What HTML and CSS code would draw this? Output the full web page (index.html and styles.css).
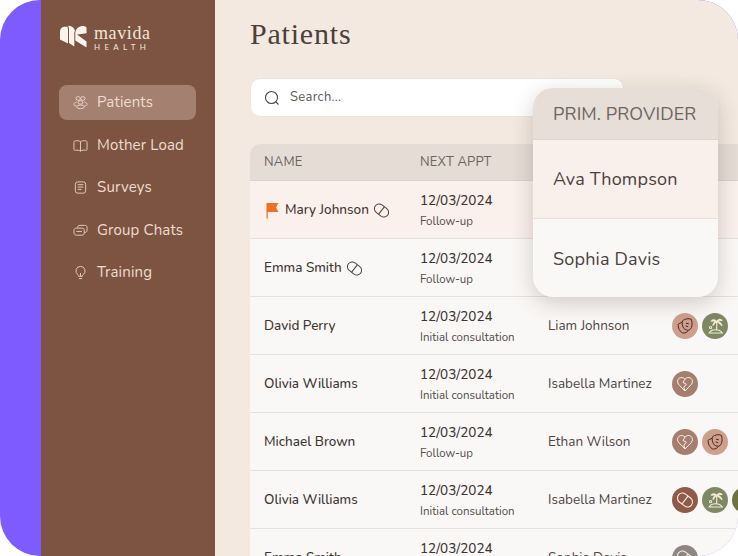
FILE: index.html
```html
<!DOCTYPE html>
<html lang="en">
<head>
<meta charset="utf-8">
<title>Patients</title>
<link rel="stylesheet" href="styles.css">
</head>
<body>
<svg class="defs" width="0" height="0" aria-hidden="true">
  <symbol id="pill" viewBox="0 0 18 18"><g fill="none" stroke="currentColor" stroke-width="1.1"><rect x=".8" y="4" width="16.4" height="10" rx="5" transform="rotate(38 9 9)"/><path d="M12 5.200 6 12.800"/></g></symbol>
  <symbol id="heart" viewBox="0 0 18 18"><g fill="none" stroke="currentColor" stroke-width="1" stroke-linejoin="round"><path d="M9 16 2.800 9.600C1 7.600 1.200 4.600 3.200 3.200 5 2 7.400 2.400 9 4.200 10.600 2.400 13 2 14.800 3.200 16.800 4.600 17 7.600 15.200 9.600Z"/><path d="M9 4.200 7 7.400 10.400 9.200 7.800 12.200 9 16"/></g></symbol>
  <symbol id="masks" viewBox="0 0 18 18"><g fill="none" stroke="currentColor" stroke-width="1" stroke-linejoin="round"><path d="M6.500 3.800C8.500 1.800 13 1 15.400 2.400 16.600 6 16.400 10.400 14 12.600 12.200 14 9.400 13 7.800 11.400 6.400 9.600 5.800 6 6.500 3.800Z"/><path d="M6 5.400C4.500 5.800 3 6.600 2 7.400 2 10.800 3.600 14.600 6.600 16 9.400 16.400 11.400 15 12.400 13.400"/><path d="M10 6.200 12.800 6.800M9.600 9 12.200 9.600"/></g></symbol>
  <symbol id="palm" viewBox="0 0 18 18"><g fill="none" stroke="currentColor" stroke-width="1.100" stroke-linecap="round" stroke-linejoin="round"><path d="M3 16C4.500 13.600 7 12.800 9.500 12.800 12.500 12.800 15 14 16.500 16Z"/><path d="M10.500 12.800C11 9.500 11 6.500 10.500 4.500"/><path d="M10.500 4.500C9 2.400 7 2.400 5.200 4.200 7.500 3.700 9 3.800 10.500 4.500ZM10.500 4.500C12 2 14 1.800 16 3.500 14 3.400 12 3.700 10.500 4.500ZM10.500 4.500C13 4.500 15 6 16 8.500 14.200 6.700 12.400 5.500 10.500 4.500ZM10.500 4.500C8.500 5 7.300 6.300 7 8.500 8 7 9.200 5.500 10.500 4.500Z"/><circle cx="4.600" cy="10.600" r="1.100"/></g></symbol>
</svg>
<div class="frame">
  <aside class="sidebar">
    <div class="brand">
      <svg class="brand-mark" viewBox="0 0 27 24" aria-hidden="true"><path fill="#fbf4ec" d="M0 6.500C0 3.500 2 1.800 4.500 1.800H7.500L8 5V18.500L0 14.500Z"/><path fill="#fbf4ec" d="M8 .8C11.500.8 14 2.500 15 5.500 14.500 6.500 14.300 7.500 14.300 8.500V21.500L9 18V5C9 3.500 8.800 2 8 .8Z"/><path fill="#fbf4ec" d="M15.300 8C15.800 3.500 19 1 23 1 24.500 1 25.700 1.500 26.500 2.500V8.200L17 9.500 26.500 16.500V22.500L15.300 15.500Z"/></svg>
      <div class="brand-text"><span class="brand-name">mavida</span><span class="brand-sub">HEALTH</span></div>
    </div>
    <nav class="nav">
      <a class="nav-item active"><svg class="nav-icon" viewBox="0 0 16 16" aria-hidden="true"><g fill="none" stroke="currentColor"><ellipse cx="5.500" cy="3.700" rx="2.300" ry="2"/><ellipse cx="10.500" cy="3.700" rx="2.300" ry="2"/><ellipse cx="8" cy="7.900" rx="2.600" ry="1.900"/><path d="M4 7.500C2 8 1 8.800 1 10s1.500 1.700 3 1.800M12 7.500c2 .5 3 1.300 3 2.500s-1.500 1.700-3 1.800"/><ellipse cx="8" cy="12.600" rx="4" ry="2"/></g></svg><span>Patients</span></a>
      <a class="nav-item"><svg class="nav-icon" viewBox="0 0 16 16" aria-hidden="true"><g fill="none" stroke="currentColor" stroke-linejoin="round"><path d="M8 4C6.500 2.800 4 2.500 2 3.200 1 3.500 1 4 1 5v7c0 1 .5 1.300 1.500 1.100C4.500 12.700 6.500 13 8 14c1.500-1 3.500-1.300 5.500-.9 1 .2 1.500-.1 1.500-1.100V5c0-1 0-1.500-1-1.800C12 2.500 9.500 2.800 8 4ZM8 4v10"/></g></svg><span>Mother Load</span></a>
      <a class="nav-item"><svg class="nav-icon" viewBox="0 0 16 16" aria-hidden="true"><g fill="none" stroke="currentColor"><rect x="2.500" y="2" width="11" height="12" rx="2.500"/><path d="M5 5h6M5 7.500h6M5 10h4"/></g></svg><span>Surveys</span></a>
      <a class="nav-item"><svg class="nav-icon" viewBox="0 0 16 16" aria-hidden="true"><g fill="none" stroke="currentColor" stroke-linejoin="round"><path d="M5 5V4.500C5 3 6 2.500 7.500 2.500h5c1.500 0 2.500.8 2.500 2.300v3c0 1.400-1 2.200-2.200 2.200H12"/><path d="M3.500 5.500h6C11 5.500 12 6.300 12 7.700v3c0 1.500-1 2.300-2.500 2.300H4c-1.800 0-3-1-3-2.700V8c0-1.500 1-2.500 2.500-2.500Z"/><path d="M3.500 9h6"/></g></svg><span>Group Chats</span></a>
      <a class="nav-item"><svg class="nav-icon" viewBox="0 0 16 16" aria-hidden="true"><g fill="none" stroke="currentColor" stroke-linejoin="round"><path d="M8 1.500a4.800 4.800 0 0 0-3 8.600c.8.700 1 1.300 1 2h4c0-.7.200-1.300 1-2a4.800 4.800 0 0 0-3-8.600Z"/><path d="M6.300 14.500h3.400M8 12V8.500"/></g></svg><span>Training</span></a>
    </nav>
  </aside>
  <main class="main">
    <h1 class="title">Patients</h1>
    <div class="search">
      <svg class="search-icon" viewBox="0 0 16 16" aria-hidden="true"><g fill="none" stroke="currentColor" stroke-width="1.100"><circle cx="7.500" cy="7.500" r="6"/><path d="M12 12l2.500 2.500"/></g></svg>
      <span class="search-text">Search...</span>
    </div>
    <div class="table">
      <div class="row head"><span>NAME</span><span>NEXT APPT</span><span></span><span></span></div>
      <div class="row flagged">
        <div class="name"><svg class="flag" viewBox="0 0 14 17" aria-hidden="true"><path fill="#ee6f25" d="M1 1h12l-2.500 4.500L13 10H2.200v6.500H1Z"/></svg>Mary Johnson<svg class="pill-mark"><use href="#pill"/></svg></div>
        <div class="appt"><b>12/03/2024</b><small>Follow-up</small></div><span></span><span></span>
      </div>
      <div class="row">
        <div class="name">Emma Smith<svg class="pill-mark"><use href="#pill"/></svg></div>
        <div class="appt"><b>12/03/2024</b><small>Follow-up</small></div><span></span><span></span>
      </div>
      <div class="row">
        <div class="name">David Perry</div>
        <div class="appt"><b>12/03/2024</b><small>Initial consultation</small></div>
        <div class="provider">Liam Johnson</div>
        <div class="tags"><i class="tag pink"><svg><use href="#masks"/></svg></i><i class="tag green"><svg><use href="#palm"/></svg></i></div>
      </div>
      <div class="row">
        <div class="name">Olivia Williams</div>
        <div class="appt"><b>12/03/2024</b><small>Initial consultation</small></div>
        <div class="provider">Isabella Martinez</div>
        <div class="tags"><i class="tag mauve"><svg><use href="#heart"/></svg></i></div>
      </div>
      <div class="row">
        <div class="name">Michael Brown</div>
        <div class="appt"><b>12/03/2024</b><small>Follow-up</small></div>
        <div class="provider">Ethan Wilson</div>
        <div class="tags"><i class="tag mauve"><svg><use href="#heart"/></svg></i><i class="tag pink"><svg><use href="#masks"/></svg></i></div>
      </div>
      <div class="row">
        <div class="name">Olivia Williams</div>
        <div class="appt"><b>12/03/2024</b><small>Initial consultation</small></div>
        <div class="provider">Isabella Martinez</div>
        <div class="tags"><i class="tag rust"><svg><use href="#pill"/></svg></i><i class="tag green"><svg><use href="#palm"/></svg></i><i class="tag olive"></i></div>
      </div>
      <div class="row">
        <div class="name">Emma Smith</div>
        <div class="appt"><b>12/03/2024</b><small>Follow-up</small></div>
        <div class="provider">Sophia Davis</div>
        <div class="tags"><i class="tag gray"><svg><use href="#pill"/></svg></i></div>
      </div>
    </div>
    <div class="popup">
      <div class="popup-head">PRIM. PROVIDER</div>
      <div class="popup-item selected">Ava Thompson</div>
      <div class="popup-item">Sophia Davis</div>
    </div>
  </main>
</div>
</body>
</html>
```
FILE: styles.css
```css
* { box-sizing: border-box; }
html, body { margin: 0; height: 100%; background: #fff; }
body { font-family: "Nunito", "Lato", "Noto Sans", sans-serif; color: #453c39; overflow: hidden; }
.defs { position: absolute; }
.frame { display: flex; width: 738px; height: 556px; border-radius: 40px; overflow: hidden; background: #7d5bff; padding-left: 41px; }
.sidebar { flex: 0 0 174px; background: #7d5442; padding: 25px 19px 0 18px; }
.brand { display: flex; align-items: flex-start; gap: 7px; padding-left: 1px; height: 60px; }
.brand-mark { width: 27px; height: 24px; flex: none; }
.brand-text { display: flex; flex-direction: column; color: #f3e4d8; }
.brand-name { font: 18px/17px "Liberation Serif", serif; letter-spacing: .6px; }
.brand-sub { font: 8px/9px "Lato", sans-serif; letter-spacing: 4.300px; margin-top: 1px; }
.nav { display: flex; flex-direction: column; gap: 7.500px; }
.nav-item { display: flex; align-items: center; gap: 9px; height: 35px; padding-left: 14px; border-radius: 8px; color: #efdccf; font-size: 15px; letter-spacing: .15px; }
.nav-item span { margin-top: -1px; }
.nav-item.active { background: #a38070; }
.nav-icon { width: 15px; height: 15px; flex: none; stroke-width: .9; }
.main { position: relative; flex: 1; min-width: 0; background: #f3e9e0; padding: 0 0 0 35px; overflow: hidden; }
.title { margin: 0; height: 78px; padding-top: 16px; font: 400 30px/36px "Liberation Serif", serif; color: #4a403c; letter-spacing: .8px; }
.search { display: flex; align-items: center; gap: 10px; width: 374px; height: 39px; padding-left: 13px; background: #fff; border: 1px solid #ece5de; border-radius: 10px; font-size: 13px; color: #5f5753; letter-spacing: .3px; }
.search-text { margin-top: -2px; }
.search-icon { width: 16px; height: 16px; color: #4d4643; }
.table { width: 560px; margin-top: 27px; border-radius: 10px 0 0 0; overflow: hidden; background: #faf8f6; }
.row { display: grid; grid-template-columns: 156px 128px 124px 1fr; align-items: center; height: 58px; padding-left: 14px; border-bottom: 1px solid #e6e1dc; font-size: 13.500px; }
.row.head { height: 37px; background: #e5dcd6; border-bottom-color: #dcd2cb; font-size: 13px; color: #6c625e; letter-spacing: .15px; }
.row.flagged { background: #faf0ec; }
.name { display: flex; align-items: center; font-weight: 500; color: #3f3633; white-space: nowrap; }
.flag { width: 15px; height: 17px; margin: 2px 5px 0 1px; flex: none; }
.pill-mark { width: 17px; height: 17px; margin-left: 4px; margin-top: 2px; color: #4d4643; flex: none; }
.appt { display: flex; flex-direction: column; gap: 4px; margin-top: 1px; }
.appt b { font-weight: 500; font-size: 13.500px; line-height: 18px; color: #3f3633; }
.appt small { font-size: 11.500px; line-height: 15px; color: #544b47; }
.provider { color: #4f4643; white-space: nowrap; }
.tags { display: flex; gap: 4px; }
.tag { display: flex; align-items: center; justify-content: center; width: 26px; height: 26px; border-radius: 50%; flex: none; color: #fbeee2; }
.tag svg { width: 18px; height: 18px; }
.tag.pink { background: #cf9f8d; color: #4a2a20; }
.tag.green { background: #7f8865; color: #f4ecd2; }
.tag.mauve { background: #a67e70; }
.tag.rust { background: #8f5a48; }
.tag.olive { background: #6f7340; }
.tag.gray { background: #8d8783; }
.popup { position: absolute; left: 318px; top: 88px; width: 185px; height: 209px; border-radius: 20px; overflow: hidden; background: #faf8f6; box-shadow: 0 6px 22px rgba(60, 40, 30, .22); }
.popup-head { display: flex; align-items: center; height: 52px; padding-left: 20px; background: #e6ded7; border-bottom: 1px solid #ddd4cd; font-size: 18px; color: #6f6561; letter-spacing: .1px; }
.popup-item { display: flex; align-items: center; height: 79px; padding-left: 20px; font-size: 18px; color: #4a413e; letter-spacing: .2px; border-bottom: 1px solid #e6e1dc; }
.popup-item:last-child { border-bottom: 0; }
.popup-item.selected { background: #f9efeb; }
```
